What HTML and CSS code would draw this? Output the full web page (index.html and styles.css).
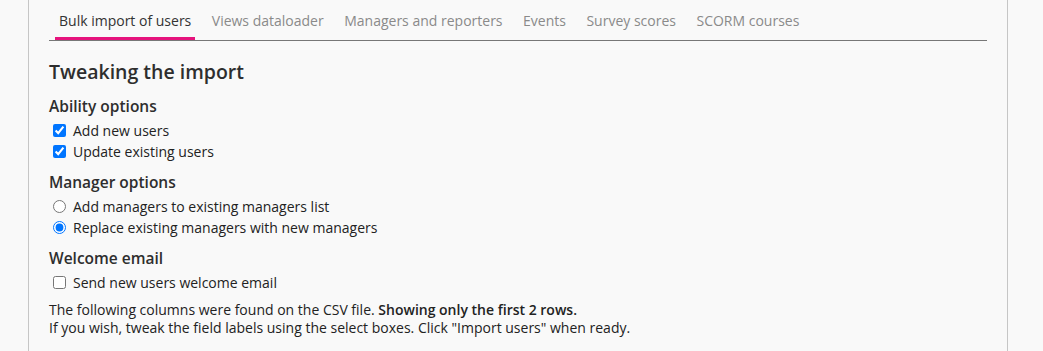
FILE: index.html
```html
<!DOCTYPE html>
<html>
<head>
<meta charset="utf-8">
<link rel="stylesheet" href="styles.css">
</head>
<body>
<div class="panel">
  <nav class="tabs">
    <a class="tab active">Bulk import of users</a>
    <a class="tab">Views dataloader</a>
    <a class="tab">Managers and reporters</a>
    <a class="tab">Events</a>
    <a class="tab">Survey scores</a>
    <a class="tab">SCORM courses</a>
  </nav>
  <h2 class="title">Tweaking the import</h2>
  <h3 class="group">Ability options</h3>
  <label class="opt"><input type="checkbox" checked><span>Add new users</span></label>
  <label class="opt"><input type="checkbox" checked><span>Update existing users</span></label>
  <h3 class="group">Manager options</h3>
  <label class="opt"><input type="radio" name="mgr"><span>Add managers to existing managers list</span></label>
  <label class="opt"><input type="radio" name="mgr" checked><span>Replace existing managers with new managers</span></label>
  <h3 class="group">Welcome email</h3>
  <label class="opt"><input type="checkbox"><span>Send new users welcome email</span></label>
  <p class="note">The following columns were found on the CSV file. <b>Showing only the first 2 rows.</b><br>If you wish, tweak the field labels using the select boxes. Click "Import users" when ready.</p>
</div>
</body>
</html>
```

FILE: styles.css
```css
html, body {
  margin: 0;
  padding: 0;
  background: #f9f9f9;
  font-family: "Open Sans", "Liberation Sans", sans-serif;
  color: #222;
}
.panel {
  margin-left: 28px;
  width: 980px;
  height: 351px;
  border-left: 1px solid #c6c6c6;
  border-right: 1px solid #c6c6c6;
  padding: 0 20px;
  box-sizing: border-box;
}
.tabs {
  display: flex;
  gap: 12.5px;
  border-bottom: 1px solid #777;
  padding-top: 11px;
  padding-left: 6px;
}
.tab {
  font-size: 14px;
  line-height: 20px;
  padding: 0 4px 6px 4px;
  color: #8a8a8a;
  border-bottom: 3px solid transparent;
}
.tab.active {
  color: #333;
  border-bottom-color: #e6137d;
}
.title {
  margin: 17px 0 0 0;
  font-size: 19.5px;
  line-height: 28px;
  font-weight: 600;
  color: #2e2e2e;
}
.group {
  margin: 8px 0 2px 0;
  font-size: 15.5px;
  line-height: 24px;
  font-weight: 600;
  color: #2e2e2e;
}
.opt {
  display: flex;
  align-items: center;
  font-size: 14px;
  line-height: 21px;
  padding-left: 4px;
}
.opt input {
  margin: 0 7px 0 0;
}
.note {
  margin: 8px 0 0 0;
  font-size: 14px;
  line-height: 18px;
}
.note b {
  font-weight: 600;
}
```
